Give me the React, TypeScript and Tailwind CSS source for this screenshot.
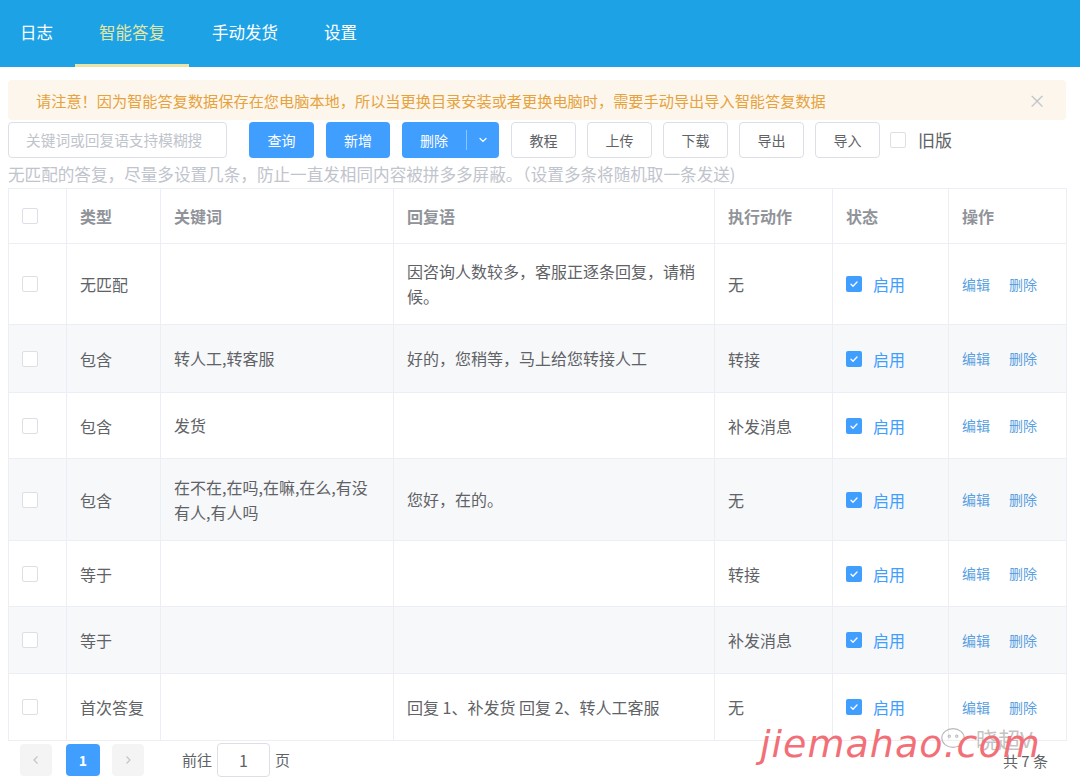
import React from 'react';

const tabs = [
  { label: '日志', cls: 'pl-5 pr-[22px]' },
  { label: '智能答复', cls: 'px-6', active: true },
  { label: '手动发货', cls: 'px-[23px]' },
  { label: '设置', cls: 'px-[23px]' },
];

const rows = [
  { type: '无匹配', kw: '', reply: '因咨询人数较多，客服正逐条回复，请稍候。', action: '无', h: 'h-[81px]' },
  { type: '包含', kw: '转人工,转客服', reply: '好的，您稍等，马上给您转接人工', action: '转接', h: 'h-[68px]', striped: true },
  { type: '包含', kw: '发货', reply: '', action: '补发消息', h: 'h-[66px]' },
  { type: '包含', kw: '在不在,在吗,在嘛,在么,有没有人,有人吗', reply: '您好，在的。', action: '无', h: 'h-[82px]', striped: true },
  { type: '等于', kw: '', reply: '', action: '转接', h: 'h-[66px]' },
  { type: '等于', kw: '', reply: '', action: '补发消息', h: 'h-[67px]', striped: true },
  { type: '首次答复', kw: '', reply: '回复 1、补发货 回复 2、转人工客服', action: '无', h: 'h-[67px]' },
];

const Box = () => <span className="block h-4 w-4 rounded-[2px] border border-[#dcdfe6] bg-white" />;

const Checked = () => (
  <span className="flex h-4 w-4 items-center justify-center rounded-[2px] bg-[#409eff]">
    <svg width="10" height="10" viewBox="0 0 10 10" fill="none">
      <path d="M2 5.2l2 2L8 3" stroke="white" strokeWidth="1.3" strokeLinecap="round" strokeLinejoin="round" />
    </svg>
  </span>
);

const WhiteBtn = ({ label }: { label: string }) => (
  <button className="h-9 w-[65px] rounded border border-[#dcdfe6] bg-white text-[14px] text-[#606266]">{label}</button>
);

const App: React.FC = () => {
  return (
    <div className="relative h-[784px] w-[1080px] overflow-hidden bg-white font-['Noto_Sans_CJK_SC','Noto_Sans',sans-serif] text-[#606266]">
      <div className="flex h-[67px] items-stretch bg-[#1da2e6]">
        {tabs.map((t) => (
          <div
            key={t.label}
            className={`flex items-center pb-[2px] text-[16.5px] ${t.cls} ${
              t.active ? 'border-b-[3px] border-[#e8e3a6] pt-[3px] text-[#e3e7a4]' : 'text-white'
            }`}
          >
            {t.label}
          </div>
        ))}
      </div>

      <div className="pl-2 pr-[14px]">
        <div className="mt-[13px] flex h-10 items-center justify-between rounded bg-[#fdf6ec] pl-7 pr-5">
          <span className="text-[15.2px] text-[#e6a23c]">
            请注意！因为智能答复数据保存在您电脑本地，所以当更换目录安装或者更换电脑时，需要手动导出导入智能答复数据
          </span>
          <span className="text-[18px] leading-none text-[#c0c4cc]">×</span>
        </div>

        <div className="mt-[2px] flex h-9 items-center">
          <div className="flex h-9 w-[219px] items-center overflow-hidden rounded border border-[#dcdfe6] pl-[17px] text-[14.7px] whitespace-nowrap text-[#c0c4cc]">
            关键词或回复语支持模糊搜
          </div>
          <button className="ml-[22px] h-9 w-[65px] rounded bg-[#409eff] text-[14px] text-white">查询</button>
          <button className="ml-3 h-9 w-[64px] rounded bg-[#409eff] text-[14px] text-white">新增</button>
          <div className="ml-3 flex h-9 w-[97px] items-center rounded bg-[#409eff] text-white">
            <span className="w-16 text-center text-[14px]">删除</span>
            <span className="h-5 w-px bg-white/40" />
            <span className="flex flex-1 items-center justify-center">
              <svg width="12" height="12" viewBox="0 0 12 12" fill="none">
                <path d="M3 4.5l3 3 3-3" stroke="white" strokeWidth="1.2" strokeLinecap="round" />
              </svg>
            </span>
          </div>
          <div className="ml-3 flex gap-[11px]">
            <WhiteBtn label="教程" />
            <WhiteBtn label="上传" />
            <WhiteBtn label="下载" />
            <WhiteBtn label="导出" />
            <WhiteBtn label="导入" />
          </div>
          <span className="ml-[10px]">
            <Box />
          </span>
          <span className="ml-[12px] text-[17px] text-[#606266]">旧版</span>
        </div>

        <div className="mt-[6px] h-5 text-[16.6px] leading-5 whitespace-nowrap text-[#c0c4cc]">
          无匹配的答复，尽量多设置几条，防止一直发相同内容被拼多多屏蔽。（设置多条将随机取一条发送)
        </div>

        <table className="mt-1 w-[1058px] table-fixed border-collapse border border-[#ebeef5] text-[16px]">
          <colgroup>
            <col className="w-[58px]" />
            <col className="w-[94px]" />
            <col className="w-[233px]" />
            <col className="w-[321px]" />
            <col className="w-[118px]" />
            <col className="w-[116px]" />
            <col className="w-[118px]" />
          </colgroup>
          <thead>
            <tr className="h-[55px] text-left font-bold text-[#909399]">
              <th className="border border-[#ebeef5] pl-[13px]">
                <Box />
              </th>
              {['类型', '关键词', '回复语', '执行动作', '状态', '操作'].map((h) => (
                <th key={h} className="border border-[#ebeef5] px-[13px] font-bold">
                  {h}
                </th>
              ))}
            </tr>
          </thead>
          <tbody>
            {rows.map((r, i) => (
              <tr key={i} className={`${r.h} ${r.striped ? 'bg-[#f7f8fa]' : 'bg-white'}`}>
                <td className="border border-[#ebeef5] pl-[13px]">
                  <Box />
                </td>
                <td className="border border-[#ebeef5] px-[13px]">{r.type}</td>
                <td className="border border-[#ebeef5] px-[13px] leading-[25px]">{r.kw}</td>
                <td className="border border-[#ebeef5] px-[13px] leading-[25px]">{r.reply}</td>
                <td className="border border-[#ebeef5] px-[13px]">{r.action}</td>
                <td className="border border-[#ebeef5] px-[13px]">
                  <div className="flex items-center gap-[11px]">
                    <Checked />
                    <span className="text-[#409eff]">启用</span>
                  </div>
                </td>
                <td className="border border-[#ebeef5] px-[13px]">
                  <div className="flex gap-[19px] text-[14px] text-[#5a9fe0]">
                    <span>编辑</span>
                    <span>删除</span>
                  </div>
                </td>
              </tr>
            ))}
          </tbody>
        </table>

        <div className="mt-[2px] flex h-[34px] items-center justify-between pl-3">
          <div className="flex items-center text-[14px]">
            <span className="flex h-8 w-8 items-center justify-center rounded-sm bg-[#f4f4f5] text-[#c0c4cc]">
              <svg width="10" height="10" viewBox="0 0 10 10" fill="none">
                <path d="M6.5 1.5L3 5l3.5 3.5" stroke="#c0c4cc" strokeWidth="1.2" />
              </svg>
            </span>
            <span className="ml-[14px] flex h-8 w-[34px] items-center justify-center rounded-sm bg-[#409eff] font-bold text-white">
              1
            </span>
            <span className="ml-3 flex h-8 w-8 items-center justify-center rounded-sm bg-[#f4f4f5]">
              <svg width="10" height="10" viewBox="0 0 10 10" fill="none">
                <path d="M3.5 1.5L7 5 3.5 8.5" stroke="#c0c4cc" strokeWidth="1.2" />
              </svg>
            </span>
            <span className="ml-[38px] text-[15px] text-[#606266]">前往</span>
            <span className="ml-[5px] flex h-[34px] w-[53px] items-center justify-center rounded border border-[#dcdfe6] text-[16px] text-[#606266]">
              1
            </span>
            <span className="ml-[5px] text-[15px] text-[#606266]">页</span>
          </div>
          <span className="mr-[18px] mt-[2px] text-[15px] text-[#606266]">共 7 条</span>
        </div>
      </div>

      <div className="pointer-events-none absolute left-[938px] top-[724px] flex items-center gap-2 text-[22px] leading-7 text-[#9a9a9a]/60">
        <svg width="30" height="28" viewBox="0 0 32 30" fill="none" stroke="#b9b9b9" strokeWidth="1.2">
          <ellipse cx="16" cy="15" rx="12" ry="10" />
          <circle cx="12" cy="13" r="1.2" />
          <circle cx="20" cy="13" r="1.2" />
        </svg>
        <span>晓超V</span>
      </div>
      <div className="pointer-events-none absolute left-[760px] top-[724px] font-['DejaVu_Sans',sans-serif] text-[38px] leading-[40px] font-light tracking-[1px] text-[#f36f78] italic">
        jiemahao.com
      </div>
    </div>
  );
};

export default App;
